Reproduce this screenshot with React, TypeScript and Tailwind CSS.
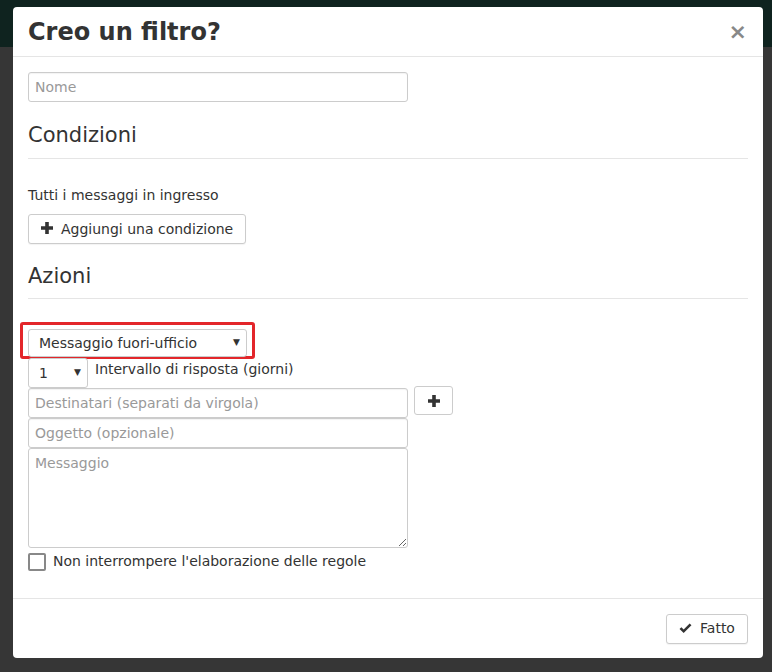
import React from "react";

const font = { fontFamily: '"DejaVu Sans", Verdana, sans-serif' };

const Plus = ({ className = "" }: { className?: string }) => (
  <svg viewBox="0 0 12 12" className={className} fill="currentColor">
    <path d="M4.2 0h3.6v4.2H12v3.6H7.8V12H4.2V7.8H0V4.2h4.2z" />
  </svg>
);

const Check = () => (
  <svg viewBox="0 0 14 12" className="w-[13px] h-[11px]" fill="currentColor">
    <path d="M0.5 6.5l2-2 2.5 2.5 6.5-6.5 2 2-8.5 8.5z" />
  </svg>
);

const inputCls =
  "block w-[380px] h-[30px] border border-[#ccc] rounded-[3px] px-[6px] text-[14px] text-[#333] placeholder:text-[#999] bg-white outline-none shadow-[inset_0_1px_1px_rgba(0,0,0,0.05)]";

export default function App() {
  return (
    <div className="relative w-[772px] h-[672px] overflow-hidden bg-[#363636]" style={font}>
      <div className="h-[47px] bg-[#0f231f]" />
      <div className="absolute left-[13px] top-[7px] w-[750px] h-[651px] bg-white rounded-[4px] flex flex-col text-[#333]">
        <div className="h-[50px] border-b border-[#e5e5e5] flex items-center justify-between pl-[15px] pr-[16px] pt-[1px]">
          <h4 className="text-[24px] font-bold text-[#333] leading-none">Creo un filtro?</h4>
          <span className="text-[#888] text-[22px] font-bold leading-none">×</span>
        </div>
        <div className="flex-1 px-[15px] pt-[15px]">
          <input className={inputCls} placeholder="Nome" />
          <h3 className="text-[21px] leading-none mt-[23px] pb-[12px] border-b border-[#e5e5e5]">Condizioni</h3>
          <p className="text-[14px] mt-[27px] leading-[18px]">Tutti i messaggi in ingresso</p>
          <button className="mt-[10px] h-[30px] px-[12px] border border-[#ccc] rounded-[3px] bg-white text-[14px] flex items-center gap-[8px] shadow-[0_1px_1px_rgba(0,0,0,0.05)]">
            <Plus className="w-[12px] h-[12px] -mt-[2px]" />
            Aggiungi una condizione
          </button>
          <h3 className="text-[21px] leading-none mt-[22px] pb-[11px] border-b border-[#e5e5e5]">Azioni</h3>
          <div className="mt-[23px] -ml-[8px] w-[235px] h-[37px] border-[3px] border-[#e3262a] rounded-[3px] pl-[5px] pt-[4px]">
            <div className="w-[219px] h-[28px] border border-[#ccc] rounded-[3px] flex items-center justify-between pl-[10px] pr-[6px] text-[14px]">
              <span>Messaggio fuori-ufficio</span>
              <span className="text-[9px]">▼</span>
            </div>
          </div>
          <div className="flex items-start -mt-[1px]">
            <div className="w-[60px] h-[30px] border border-[#ccc] rounded-[3px] flex items-center justify-between pl-[10px] pr-[6px] text-[14px]">
              <span>1</span>
              <span className="text-[9px]">▼</span>
            </div>
            <span className="text-[14px] ml-[7px] mt-[1px]">Intervallo di risposta (giorni)</span>
          </div>
          <div className="flex items-start">
            <input className={inputCls} placeholder="Destinatari (separati da virgola)" />
            <button className="ml-[6px] -mt-[2px] w-[39px] h-[29px] border border-[#ccc] rounded-[3px] bg-white flex items-center justify-center">
              <Plus className="w-[12px] h-[12px]" />
            </button>
          </div>
          <input className={inputCls} placeholder="Oggetto (opzionale)" />
          <textarea
            className="block w-[380px] h-[100px] border border-[#ccc] rounded-[3px] px-[6px] py-[4px] text-[14px] placeholder:text-[#999] outline-none"
            placeholder="Messaggio"
          />
          <label className="flex items-center mt-[3px] text-[14px]">
            <span className="w-[18px] h-[18px] border-2 border-[#888] rounded-[2px] bg-white" />
            <span className="ml-[7px]">Non interrompere l'elaborazione delle regole</span>
          </label>
        </div>
        <div className="h-[60px] border-t border-[#e5e5e5] flex items-center justify-end pr-[15px]">
          <button className="h-[30px] w-[82px] border border-[#ccc] rounded-[3px] bg-white text-[14px] flex items-center justify-center gap-[8px] shadow-[0_1px_1px_rgba(0,0,0,0.05)]">
            <Check />
            Fatto
          </button>
        </div>
      </div>
    </div>
  );
}
